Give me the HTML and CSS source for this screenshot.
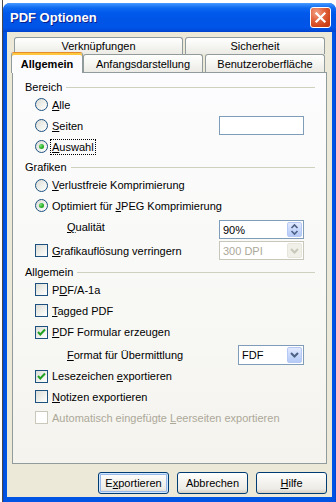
FILE: index.html
```html
<!DOCTYPE html>
<html lang="de">
<head>
<meta charset="utf-8">
<title>PDF Optionen</title>
<link rel="stylesheet" href="styles.css">
</head>
<body>
<div class="window">
  <div class="titlebar">
    <span class="title">PDF Optionen</span>
    <span class="close">
      <svg width="19" height="19" viewBox="0 0 19 19"><path d="M5.5 5.5 L13.5 13.5 M13.5 5.5 L5.5 13.5" stroke="#fff" stroke-width="2.2" stroke-linecap="square" fill="none"/></svg>
    </span>
  </div>
  <div class="frame">
    <div class="body">
      <div class="tabs">
        <div class="tabrow back">
          <div class="tab w169">Verknüpfungen</div>
          <div class="tab w140">Sicherheit</div>
        </div>
        <div class="tabrow front">
          <div class="tab active">Allgemein</div>
          <div class="tab w120">Anfangsdarstellung</div>
          <div class="tab w120 gap">Benutzeroberfläche</div>
        </div>
      </div>
      <div class="panel">
        <div class="group-title mt0"><span>Bereich</span><i class="rule"></i></div>
        <div class="row h21"><span class="radio"></span><span class="lbl"><u>A</u>lle</span></div>
        <div class="row h21"><span class="radio"></span><span class="lbl"><u>S</u>eiten</span><span class="field"></span></div>
        <div class="row h21"><span class="radio on"></span><span class="lbl focus"><u>A</u>uswahl</span></div>

        <div class="group-title"><span>Grafiken</span><i class="rule"></i></div>
        <div class="row h22"><span class="radio"></span><span class="lbl"><u>V</u>erlustfreie Komprimierung</span></div>
        <div class="row h19"><span class="radio on"></span><span class="lbl">Optimiert für <u>J</u>PEG Komprimierung</span></div>
        <div class="row h24 indent"><span class="lbl"><u>Q</u>ualität</span><span class="field spinfield"><span class="val">90%</span><span class="spin"><svg width="13" height="15" viewBox="0 0 13 15"><path d="M3.5 6 L6.5 3 L9.5 6 M3.5 9 L6.5 12 L9.5 9" stroke="#4D6185" stroke-width="1.6" fill="none"/></svg></span></span></div>
        <div class="row h23"><span class="cb"></span><span class="lbl"><u>G</u>rafikauflösung verringern</span><span class="field combo disabled"><span class="val">300 DPI</span><span class="dd"><svg width="13" height="15" viewBox="0 0 13 15"><path d="M3 6 L6.5 9.5 L10 6" stroke="#C9C7BA" stroke-width="2" fill="none"/></svg></span></span></div>

        <div class="group-title"><span>Allgemein</span><i class="rule"></i></div>
        <div class="row h21"><span class="cb"></span><span class="lbl">P<u>D</u>F/A-1a</span></div>
        <div class="row h21"><span class="cb"></span><span class="lbl"><u>T</u>agged PDF</span></div>
        <div class="row h22"><span class="cb on"><svg width="11" height="11" viewBox="0 0 11 11"><path d="M2 5 L4.3 7.5 L9 2.5" stroke="#21A121" stroke-width="2" fill="none"/></svg></span><span class="lbl"><u>P</u>DF Formular erzeugen</span></div>
        <div class="row h23 indent"><span class="lbl"><u>F</u>ormat für Übermittlung</span><span class="field combo small"><span class="val">FDF</span><span class="dd"><svg width="13" height="15" viewBox="0 0 13 15"><path d="M3 6 L6.5 9.5 L10 6" stroke="#4D6185" stroke-width="2" fill="none"/></svg></span></span></div>
        <div class="row h20"><span class="cb on"><svg width="11" height="11" viewBox="0 0 11 11"><path d="M2 5 L4.3 7.5 L9 2.5" stroke="#21A121" stroke-width="2" fill="none"/></svg></span><span class="lbl">Lesezeichen <u>e</u>xportieren</span></div>
        <div class="row h21"><span class="cb"></span><span class="lbl"><u>N</u>otizen exportieren</span></div>
        <div class="row h21"><span class="cb disabled"></span><span class="lbl dis">Automatisch eingefügte <u>L</u>eerseiten exportieren</span></div>
      </div>
      <div class="buttons">
        <span class="btn default">E<u>x</u>portieren</span>
        <span class="btn">Abbrechen</span>
        <span class="btn"><u>H</u>ilfe</span>
      </div>
    </div>
  </div>
</div>
</body>
</html>
```

FILE: styles.css
```css
* { box-sizing: border-box; }
html, body { margin: 0; padding: 0; }
body {
  width: 336px;
  height: 502px;
  overflow: hidden;
  padding: 3px 0 0 3px;
  background: linear-gradient(to right, #ffffff 0 2px, #4a4a4a 2px 3px, #ffffff 3px);
  font-family: "Liberation Sans", Arial, sans-serif;
  font-size: 11px;
  color: #000;
}
u { text-decoration: underline; text-underline-offset: 1px; }

.window {
  width: 333px;
  height: 499px;
  display: flex;
  flex-direction: column;
  border-radius: 7px 7px 0 0;
  background: #0054E3;
}
.titlebar {
  height: 29px;
  flex: none;
  display: flex;
  align-items: center;
  padding: 0 5px 1px 7px;
  border-radius: 7px 7px 0 0;
  background: linear-gradient(to bottom, #4A9CFF 0, #2C85FA 2px, #0E69F0 5px, #0059EC 10px, #0054E6 18px, #0055EA 24px, #0049D6 28px, #0040C8 29px);
}
.title {
  flex: 1;
  color: #fff;
  font-weight: bold;
  font-size: 13px;
  text-shadow: 1px 1px 0 #0A1E8C;
}
.close {
  width: 21px;
  height: 21px;
  border: 1px solid #fff;
  border-radius: 3px;
  display: flex;
  align-items: center;
  justify-content: center;
  background: radial-gradient(circle at 30% 25%, #F3A38A 0, #E46A45 35%, #D2461D 70%, #BF3510 100%);
}

.frame {
  flex: 1;
  display: flex;
  padding: 0 4px 5px 4px;
  background: linear-gradient(to right, #0838C8 0, #0054E3 1px, #0054E3 calc(100% - 1px), #0838C8 100%);
}
.body {
  flex: 1;
  display: flex;
  flex-direction: column;
  padding: 5px 5px 3px 5px;
  background: #ECE9D8;
}

/* tabs */
.tabs { display: flex; flex-direction: column; }
.tabrow { display: flex; }
.tabrow.back { height: 17px; padding-left: 2px; gap: 2px; }
.tabrow.front {
  height: 20px;
  margin-top: -2px;
  align-items: flex-end;
  position: relative;
  z-index: 1;
}
.tab {
  display: flex;
  align-items: center;
  justify-content: center;
  border: 1px solid #919B9C;
  border-bottom: none;
  border-radius: 3px 3px 0 0;
  background: linear-gradient(to bottom, #FFFFFF 0, #F7F7F4 40%, #ECEBE5 100%);
}
.back .tab { height: 17px; padding-bottom: 1px; }
.front .tab { height: 18px; }
.w169 { width: 169px; }
.w140 { width: 140px; }
.w120 { width: 120px; }
.tab.gap { margin-left: 2px; }
.tab.active {
  width: 72px;
  height: 21px;
  margin-left: -1px;
  margin-bottom: -1px;
  padding-top: 1px;
  font-weight: bold;
  border-top: 1px solid #E68B2C;
  box-shadow: inset 0 2px 0 #FFC73C;
  background: #FCFCFE;
}

/* panel */
.panel {
  height: 392px;
  flex: none;
  display: flex;
  flex-direction: column;
  border: 1px solid #919B9C;
  background: linear-gradient(to bottom, #FCFCFE 0, #F8F8F5 60%, #F4F3EE 100%);
  padding-top: 7px;
}
.group-title {
  height: 14px;
  margin-top: 3px;
  display: flex;
  align-items: center;
  gap: 4px;
  padding-left: 12px;
  margin-right: 11px;
}
.group-title.mt0 { margin-top: 0; }
.rule { flex: 1; height: 1px; background: #D0D0BF; margin-top: 1px; }

.row {
  display: flex;
  align-items: center;
  padding-left: 22px;
  padding-right: 22px;
}
.row.indent { padding-left: 54px; }
.h19 { height: 19px; }
.h20 { height: 20px; }
.h21 { height: 21px; }
.h22 { height: 22px; }
.h23 { height: 23px; }
.h24 { height: 24px; }
.lbl { margin-left: 3px; padding: 1px 1px; }
.indent .lbl { margin-left: 0; padding-left: 0; }
.lbl.focus { outline: 1px dotted #000; outline-offset: 0; }
.lbl.dis { color: #ACA899; }

.radio {
  width: 13px;
  height: 13px;
  flex: none;
  border-radius: 50%;
  border: 1px solid #1C5180;
  background: linear-gradient(135deg, #DCDCD7 0, #F0F0EC 55%, #FFFFFF 100%);
  display: flex;
  align-items: center;
  justify-content: center;
}
.radio.on::after {
  content: "";
  width: 5px;
  height: 5px;
  border-radius: 50%;
  background: radial-gradient(circle at 35% 35%, #7FE27F 0, #2DB42D 50%, #1A901A 100%);
}
.cb {
  width: 13px;
  height: 13px;
  flex: none;
  border: 1px solid #1C5180;
  background: linear-gradient(135deg, #DCDCD7 0, #F0F0EC 55%, #FFFFFF 100%);
  display: flex;
  align-items: center;
  justify-content: center;
}
.cb.disabled { border-color: #CAC8BB; background: #FFFFFF; }

.field {
  margin-left: auto;
  width: 85px;
  height: 19px;
  flex: none;
  border: 1px solid #7F9DB9;
  background: #fff;
  display: flex;
  align-items: center;
}
.field .val { flex: 1; padding-left: 3px; }
.spinfield { align-self: flex-end; }
.spin, .dd {
  width: 15px;
  height: 15px;
  margin-right: 1px;
  border: 1px solid #B6C9F5;
  border-radius: 2px;
  background: linear-gradient(to bottom, #E2EAFE 0, #CBDAFC 45%, #B5CAF7 100%);
  display: flex;
  align-items: center;
  justify-content: center;
}
.combo.small { width: 66px; height: 20px; }
.combo.small .dd { height: 16px; }
.combo.disabled { border-color: #C9C7BA; color: #ACA899; background: #fff; }
.combo.disabled .dd { border-color: #E8E6DC; background: #F0EFE8; }

/* buttons */
.buttons {
  display: flex;
  justify-content: flex-end;
  gap: 8px;
  margin-top: 8px;
}
.btn {
  width: 71px;
  height: 22px;
  display: flex;
  align-items: center;
  justify-content: center;
  border: 1px solid #003C74;
  border-radius: 3px;
  background: linear-gradient(to bottom, #FFFFFF 0, #F5F4F0 40%, #ECEBE6 80%, #D6D0C5 100%);
}
.btn.default {
  box-shadow: inset 0 0 0 1px #CEE7FF, inset 0 0 0 2px #98B8EA;
}
```
